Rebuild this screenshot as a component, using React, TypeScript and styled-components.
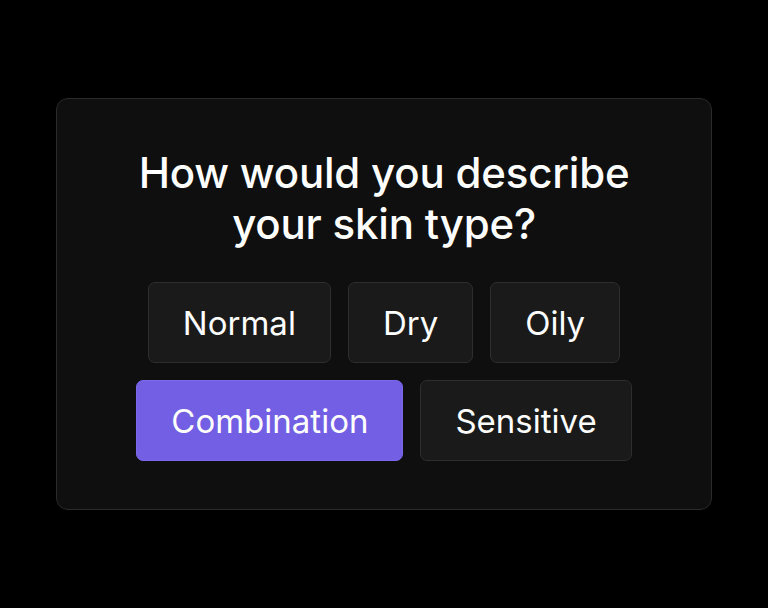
import React, { useState } from 'react';
import styled, { createGlobalStyle } from 'styled-components';

const GlobalStyle = createGlobalStyle`
  html, body {
    margin: 0;
    padding: 0;
    background: #000000;
  }
  body {
    font-family: Inter, "Noto Sans", sans-serif;
    -webkit-font-smoothing: antialiased;
  }
`;

const Page = styled.div`
  min-height: 100vh;
  display: flex;
  align-items: center;
  justify-content: center;
`;

const Card = styled.div`
  box-sizing: border-box;
  width: 656px;
  padding: 48px;
  background: #0f0f0f;
  border: 1px solid #2a2a2a;
  border-radius: 12px;
  display: flex;
  flex-direction: column;
  align-items: center;
`;

const Title = styled.h1`
  margin: 0 0 33px;
  font-size: 42px;
  line-height: 51px;
  font-weight: 500;
  color: #ffffff;
  text-align: center;
  letter-spacing: -0.2px;
`;

const Options = styled.div`
  display: flex;
  flex-wrap: wrap;
  justify-content: center;
  gap: 17px;
  max-width: 520px;
`;

const Option = styled.button<{ $selected: boolean }>`
  box-sizing: border-box;
  height: 81px;
  padding: 0 34px;
  font-family: inherit;
  font-size: 33px;
  font-weight: 400;
  color: #ffffff;
  background: ${({ $selected }) => ($selected ? '#735fe4' : '#1a1a1a')};
  border: 1px solid ${({ $selected }) => ($selected ? '#7a68ea' : '#2e2e2e')};
  border-radius: 7px;
  cursor: pointer;
`;

const choices = ['Normal', 'Dry', 'Oily', 'Combination', 'Sensitive'];

const App = () => {
  const [selected, setSelected] = useState('Combination');

  return (
    <Page>
      <GlobalStyle />
      <Card>
        <Title>
          How would you describe
          <br />
          your skin type?
        </Title>
        <Options>
          {choices.map((c) => (
            <Option key={c} $selected={selected === c} onClick={() => setSelected(c)}>
              {c}
            </Option>
          ))}
        </Options>
      </Card>
    </Page>
  );
};

export default App;
